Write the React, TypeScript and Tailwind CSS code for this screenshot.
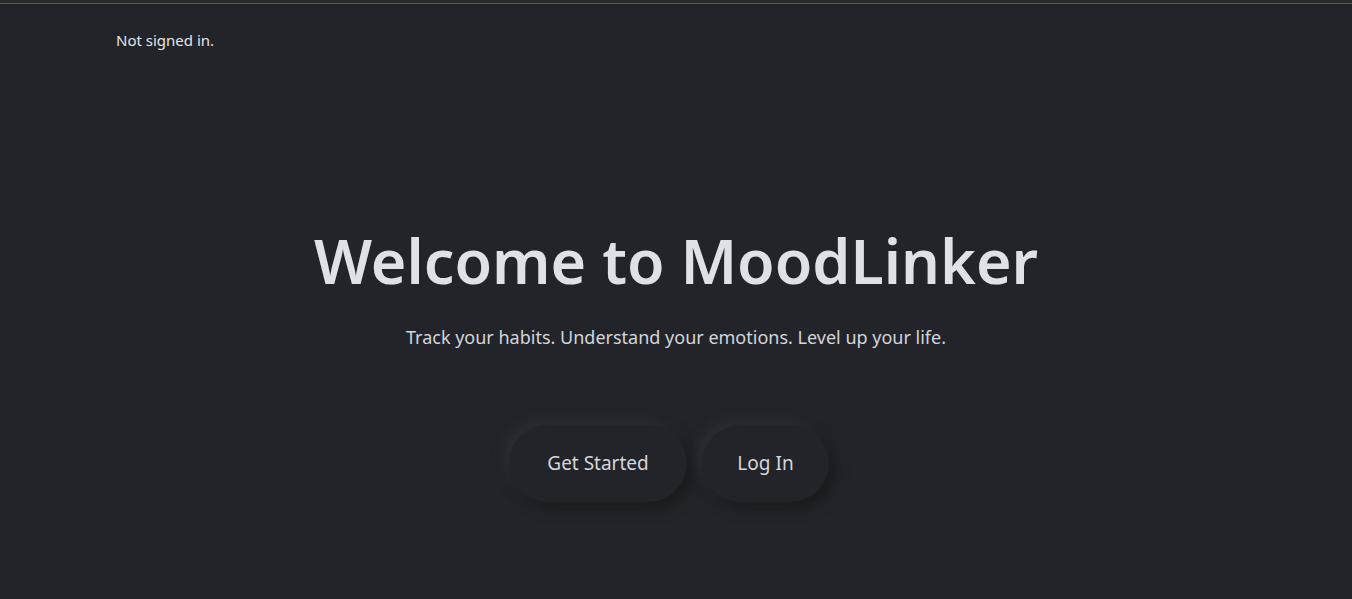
import React from 'react';

const font = { fontFamily: '"Noto Sans", "Open Sans", sans-serif' };

const NeuButton = ({ label, width }: { label: string; width: string }) => (
  <button
    className={`${width} h-[77px] rounded-full bg-[#222429] text-[19px] text-[#d4d7dc] shadow-[6px_6px_14px_#191b1f,-5px_-5px_12px_#2c2f35]`}
  >
    {label}
  </button>
);

const App = () => {
  return (
    <div className="min-h-[599px] bg-[#222429] text-[#e1e3e8]" style={font}>
      <div className="h-[3px] bg-[#2b2b2b]" />
      <div className="h-px bg-[#5a5a5a]" />
      <div className="pl-[116px] pt-[25px] text-[15px] text-[#e4e6ea]">Not signed in.</div>
      <main className="flex flex-col items-center pt-[178px]">
        <h1 className="text-[61px] font-semibold leading-none text-[#dfe1e6]">
          Welcome to MoodLinker
        </h1>
        <p className="mt-[33px] text-[18px] text-[#d3d6db]">
          Track your habits. Understand your emotions. Level up your life.
        </p>
        <div className="mt-[74px] mr-[14px] flex gap-[15px]">
          <NeuButton label="Get Started" width="w-[178px]" />
          <NeuButton label="Log In" width="w-[127px]" />
        </div>
      </main>
    </div>
  );
};

export default App;
